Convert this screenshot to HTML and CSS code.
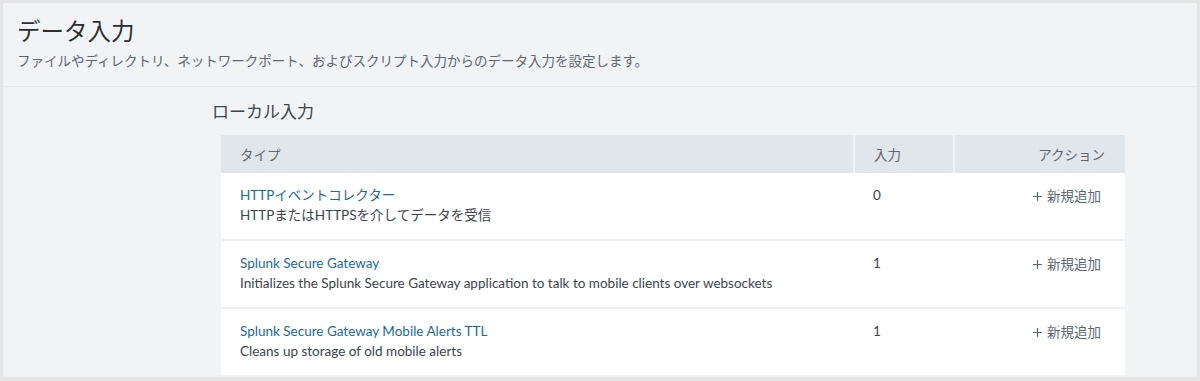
FILE: index.html
```html
<!DOCTYPE html>
<html lang="ja">

<head>
    <meta charset="UTF-8">
    <meta name="viewport" content="width=device-width, initial-scale=1.0">
    <title>データ入力</title>
    <link rel="stylesheet" href="styles.css">
</head>

<body>
    <div class="frame">
        <header class="page-header">
            <h1>データ入力</h1>
            <p class="subtitle">ファイルやディレクトリ、ネットワークポート、およびスクリプト入力からのデータ入力を設定します。</p>
        </header>
        <main class="content">
            <h2 class="section-title">ローカル入力</h2>
            <table class="inputs">
                <thead>
                    <tr>
                        <th class="col-type">タイプ</th>
                        <th class="col-count">入力</th>
                        <th class="col-action">アクション</th>
                    </tr>
                </thead>
                <tbody>
                    <tr>
                        <td class="col-type">
                            <a href="#" class="input-name">HTTPイベントコレクター</a>
                            <div class="input-desc">HTTPまたはHTTPSを介してデータを受信</div>
                        </td>
                        <td class="col-count">0</td>
                        <td class="col-action">
                            <a href="#" class="add-link"><svg class="plus" viewBox="0 0 9 9"><path d="M4.5 0v9M0 4.5h9" /></svg>新規追加</a>
                        </td>
                    </tr>
                    <tr>
                        <td class="col-type">
                            <a href="#" class="input-name">Splunk Secure Gateway</a>
                            <div class="input-desc">Initializes the Splunk Secure Gateway application to talk to mobile clients over websockets</div>
                        </td>
                        <td class="col-count">1</td>
                        <td class="col-action">
                            <a href="#" class="add-link"><svg class="plus" viewBox="0 0 9 9"><path d="M4.5 0v9M0 4.5h9" /></svg>新規追加</a>
                        </td>
                    </tr>
                    <tr>
                        <td class="col-type">
                            <a href="#" class="input-name">Splunk Secure Gateway Mobile Alerts TTL</a>
                            <div class="input-desc">Cleans up storage of old mobile alerts</div>
                        </td>
                        <td class="col-count">1</td>
                        <td class="col-action">
                            <a href="#" class="add-link"><svg class="plus" viewBox="0 0 9 9"><path d="M4.5 0v9M0 4.5h9" /></svg>新規追加</a>
                        </td>
                    </tr>
                </tbody>
            </table>
        </main>
    </div>
</body>

</html>
```

FILE: styles.css
```css
html,
body {
    margin: 0;
    padding: 0;
    height: 100%;
}

body {
    font-family: Lato, "Noto Sans CJK JP", sans-serif;
    color: #3c444d;
}

.frame {
    box-sizing: border-box;
    height: 381px;
    border-style: solid;
    border-color: #e4e4e4;
    border-width: 3px 3px 4px 3px;
    background-color: #f2f3f5;
    overflow: hidden;
}

.page-header {
    box-sizing: border-box;
    height: 84px;
    padding: 13px 14px 0 14px;
    border-bottom: 1px solid #e5e8eb;
}

.page-header h1 {
    margin: 0;
    font-size: 23.5px;
    font-weight: normal;
    line-height: 30px;
    color: #2b3033;
}

.subtitle {
    margin: 6px 0 0 0;
    font-size: 13.5px;
    line-height: 18px;
    color: #5c6773;
}

.content {
    padding: 13px 0 0 218px;
}

.section-title {
    margin: 0 0 11px -9px;
    font-size: 17px;
    font-weight: normal;
    line-height: 24px;
    color: #3c444d;
}

.inputs {
    width: 904px;
    border-collapse: collapse;
    font-size: 13.5px;
}

.inputs th {
    height: 38px;
    padding: 0 19px;
    background-color: #e1e6ea;
    font-weight: normal;
    text-align: left;
    color: #5c6773;
}

.inputs th + th {
    border-left: 2px solid #f2f3f5;
}

.inputs td {
    padding: 0 19px;
    background-color: #ffffff;
    vertical-align: top;
    border-top: 2px solid #eceef1;
}

.inputs tbody tr:first-child td {
    border-top: none;
}

.col-type {
    width: 594px;
}

.col-count {
    width: 60px;
}

.inputs td.col-type {
    padding-top: 13px;
    height: 53px;
}

.inputs td.col-count {
    padding-top: 14px;
    height: 52px;
    color: #3c444d;
}

.inputs .col-action {
    text-align: right;
    padding-right: 20px;
}

.inputs td.col-action {
    padding-top: 14px;
    height: 52px;
    padding-right: 24px;
}

.input-name {
    display: block;
    line-height: 18px;
    color: #1a6ba1;
    text-decoration: none;
}

.input-desc {
    margin-top: 2px;
    line-height: 18px;
    color: #3c444d;
}

.add-link {
    display: inline-flex;
    align-items: center;
    gap: 5px;
    line-height: 18px;
    color: #5c6773;
    text-decoration: none;
}

.plus {
    width: 9px;
    height: 9px;
    fill: none;
    stroke: #5c6773;
    stroke-width: 1.2;
}
```
